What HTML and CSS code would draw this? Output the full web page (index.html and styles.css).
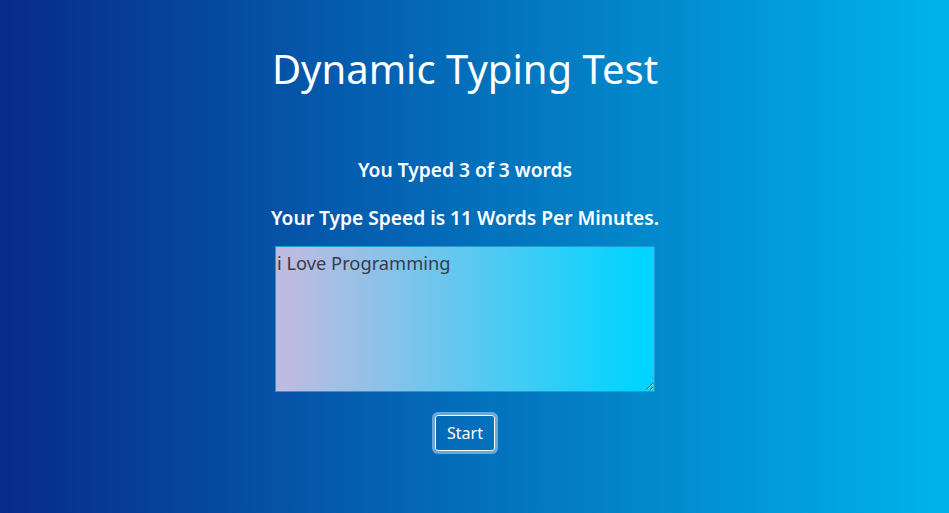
FILE: index.html
```html
<!DOCTYPE html>
<html lang="en">
<head>
<meta charset="utf-8">
<title>Dynamic Typing Test</title>
<link rel="stylesheet" href="styles.css">
</head>
<body>
<main class="app">
  <h1 class="title">Dynamic Typing Test</h1>
  <p class="stat stat-words">You Typed 3 of 3 words</p>
  <p class="stat stat-speed">Your Type Speed is 11 Words Per Minutes.</p>
  <textarea class="input" spellcheck="false">i Love Programming</textarea>
  <button class="btn" type="button">Start</button>
</main>
</body>
</html>
```
FILE: styles.css
```css
html, body {
  margin: 0;
  height: 100%;
}

body {
  background: linear-gradient(to right, #072a8b, #00b4ea);
  font-family: "Noto Sans", "Open Sans", sans-serif;
  color: #fff;
}

.app {
  display: flex;
  flex-direction: column;
  align-items: center;
  padding: 47px 19px 0 0;
}

.title {
  margin: 0;
  font-size: 40px;
  line-height: 44px;
  font-weight: 400;
}

.stat {
  margin: 0;
  font-size: 19.2px;
  line-height: 24px;
  font-weight: 600;
}

.stat-words {
  margin-top: 67px;
}

.stat-speed {
  margin-top: 24px;
}

.input {
  margin-top: 16px;
  width: 380px;
  height: 146px;
  box-sizing: border-box;
  border: 1px solid #1ea0c6;
  padding: 3px 1px 2px;
  background: linear-gradient(to right, #bdbbe0 4%, #00d4ff 96%);
  font-family: "Noto Sans", "Open Sans", sans-serif;
  font-size: 18.3px;
  color: #383c4c;
  resize: both;
  outline: none;
}

.btn {
  margin-top: 23px;
  width: 60px;
  height: 36px;
  box-sizing: border-box;
  border: 1px solid #fff;
  border-radius: 3px;
  background: transparent;
  color: #fff;
  font-family: "Noto Sans", "Open Sans", sans-serif;
  font-size: 16px;
  padding: 0;
  box-shadow: 0 0 0 3px rgba(190, 220, 245, 0.55);
}
```
